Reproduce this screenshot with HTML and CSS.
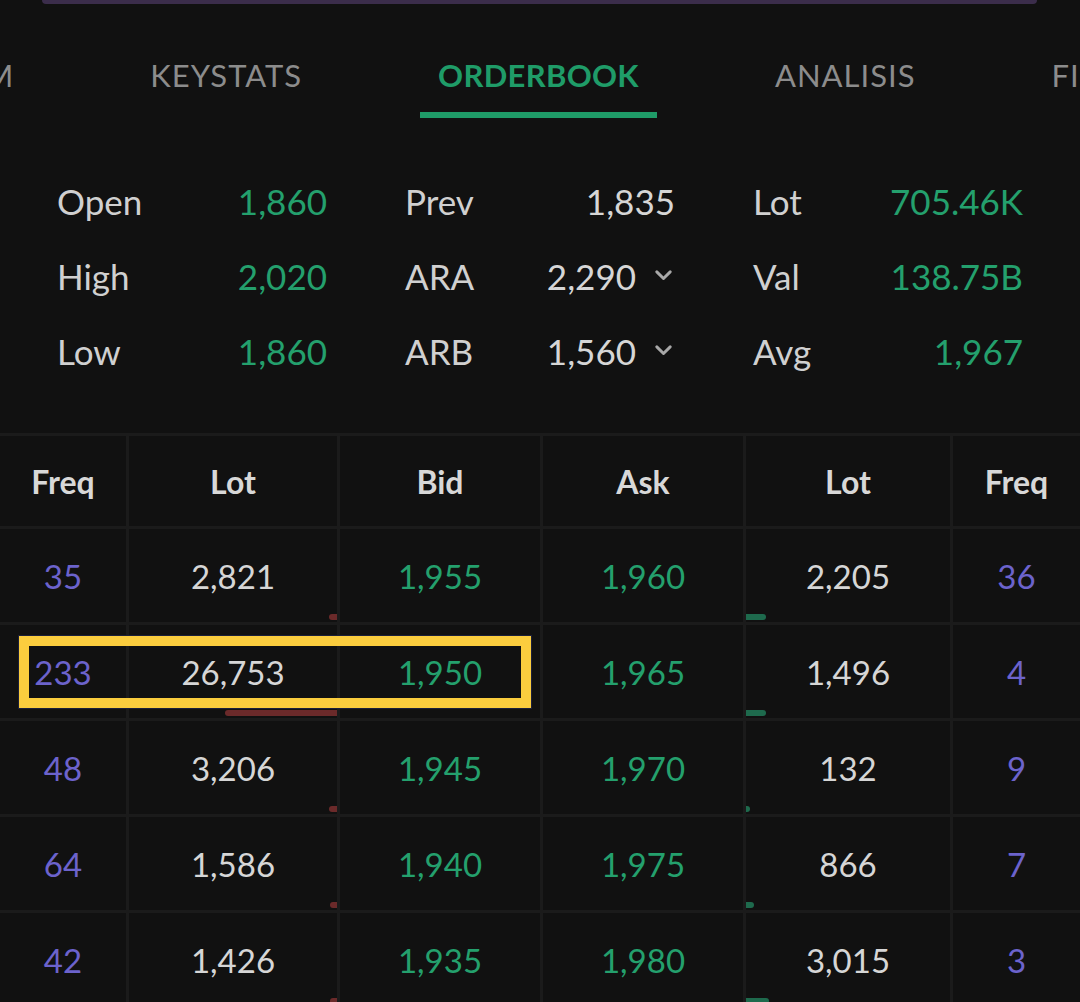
FILE: index.html
```html
<!DOCTYPE html>
<html lang="id">
<head>
  <meta charset="UTF-8">
  <meta name="viewport" content="width=device-width, initial-scale=1.0">
  <title>Orderbook</title>
  <link rel="stylesheet" href="styles.css">
</head>
<body>
  <!-- sisa kotak pencarian di atas -->
  <div class="search-edge"></div>

  <!-- Tab navigasi -->
  <nav class="tabs">
    <span class="tab">STREAM</span>
    <span class="tab">KEYSTATS</span>
    <span class="tab active">ORDERBOOK</span>
    <span class="tab">ANALISIS</span>
    <span class="tab">FINANCIALS</span>
  </nav>

  <!-- Ringkasan harga -->
  <section class="stats">
    <div class="stat"><span class="label">Open</span><span class="val up">1,860</span></div>
    <div class="stat"><span class="label">Prev</span><span class="val">1,835</span></div>
    <div class="stat"><span class="label">Lot</span><span class="val up">705.46K</span></div>

    <div class="stat"><span class="label">High</span><span class="val up">2,020</span></div>
    <div class="stat"><span class="label">ARA</span><span class="val">2,290<svg class="chev" viewBox="0 0 14 9"><path d="M1.5 1.5 7 7l5.5-5.5"/></svg></span></div>
    <div class="stat"><span class="label">Val</span><span class="val up">138.75B</span></div>

    <div class="stat"><span class="label">Low</span><span class="val up">1,860</span></div>
    <div class="stat"><span class="label">ARB</span><span class="val">1,560<svg class="chev" viewBox="0 0 14 9"><path d="M1.5 1.5 7 7l5.5-5.5"/></svg></span></div>
    <div class="stat"><span class="label">Avg</span><span class="val up">1,967</span></div>
  </section>

  <!-- Orderbook -->
  <section class="book">
    <div class="cell head">Freq</div>
    <div class="cell head">Lot</div>
    <div class="cell head">Bid</div>
    <div class="cell head">Ask</div>
    <div class="cell head">Lot</div>
    <div class="cell head">Freq</div>

    <div class="cell freq">35</div>
    <div class="cell">2,821<i class="depth bid" style="width:8px"></i></div>
    <div class="cell up">1,955</div>
    <div class="cell up">1,960</div>
    <div class="cell">2,205<i class="depth ask" style="width:20px"></i></div>
    <div class="cell freq">36</div>

    <div class="cell freq">233</div>
    <div class="cell">26,753<i class="depth bid" style="width:112px"></i></div>
    <div class="cell up">1,950</div>
    <div class="cell up">1,965</div>
    <div class="cell">1,496<i class="depth ask" style="width:20px"></i></div>
    <div class="cell freq">4</div>

    <div class="cell freq">48</div>
    <div class="cell">3,206<i class="depth bid" style="width:8px"></i></div>
    <div class="cell up">1,945</div>
    <div class="cell up">1,970</div>
    <div class="cell">132<i class="depth ask" style="width:4px"></i></div>
    <div class="cell freq">9</div>

    <div class="cell freq">64</div>
    <div class="cell">1,586<i class="depth bid" style="width:7px"></i></div>
    <div class="cell up">1,940</div>
    <div class="cell up">1,975</div>
    <div class="cell">866<i class="depth ask" style="width:8px"></i></div>
    <div class="cell freq">7</div>

    <div class="cell freq">42</div>
    <div class="cell">1,426<i class="depth bid" style="width:7px"></i></div>
    <div class="cell up">1,935</div>
    <div class="cell up">1,980</div>
    <div class="cell">3,015<i class="depth ask" style="width:23px"></i></div>
    <div class="cell freq">3</div>

    <!-- penanda kuning -->
    <div class="highlight"></div>
  </section>
</body>
</html>
```

FILE: styles.css
```css
/* Dasar */
body {
  margin: 0;
  background: #111111;
  color: #d2d2d2;
  font-family: 'Lato', 'Open Sans', sans-serif;
  width: 1080px;
  height: 1002px;
  overflow: hidden;
}

.search-edge {
  margin-left: 42px;
  width: 995px;
  height: 4px;
  background: #3b2d4b;
  border-radius: 0 0 4px 4px;
}

/* Tab */
.tabs {
  display: flex;
  gap: 100px;
  margin-top: 51px;
  margin-left: -132px;
  white-space: nowrap;
}

.tab {
  font-size: 31px;
  line-height: 40px;
  color: #8c8c8c;
  padding: 0 18px 17px;
  border-bottom: 6px solid transparent;
  letter-spacing: 1px;
}

.tab.active {
  color: #1f9c68;
  font-weight: 700;
  letter-spacing: 0.3px;
  border-bottom-color: #1f9c68;
}

/* Ringkasan */
.stats {
  display: grid;
  grid-template-columns: repeat(3, 270px);
  column-gap: 78px;
  padding: 45px 0 0 57px;
}

.stat {
  display: flex;
  justify-content: space-between;
  align-items: center;
  height: 75px;
  font-size: 35px;
}

.label {
  color: #d0d0d0;
}

.val {
  display: flex;
  align-items: center;
  color: #d6d6d6;
}

.up {
  color: #24a06d;
}

.chev {
  width: 17px;
  height: 11px;
  margin-left: 19px;
  margin-right: 3px;
  fill: none;
  stroke: #a8a8a8;
  stroke-width: 2.4;
  stroke-linecap: round;
  stroke-linejoin: round;
}

/* Tabel orderbook */
.book {
  position: relative;
  display: grid;
  grid-template-columns: 126px 208px 200px 200px 204px 1fr;
  grid-template-rows: 90px repeat(5, 93px);
  gap: 3px;
  margin-top: 45px;
  padding-top: 3px;
  background: #1b1b1b;
}

.cell {
  position: relative;
  display: flex;
  align-items: center;
  justify-content: center;
  background: #111111;
  font-size: 33px;
  color: #d6d6d6;
}

.cell.head {
  font-weight: 700;
  font-size: 32px;
  color: #d8d8d8;
}

.cell.freq {
  color: #6c63cc;
}

.cell.up {
  color: #24a06d;
}

/* bar kedalaman */
.depth {
  position: absolute;
  bottom: 2px;
  height: 6px;
  border-radius: 3px;
}

.depth.bid {
  right: 0;
  background: #6b2a2a;
  border-radius: 3px 0 0 3px;
}

.depth.ask {
  left: 0;
  background: #1e6a4d;
  border-radius: 0 3px 3px 0;
}

.highlight {
  position: absolute;
  left: 19px;
  top: 203px;
  width: 512px;
  height: 72px;
  box-sizing: border-box;
  border: 10px solid #fbcd3e;
  outline: 1px solid #1b1f3a;
  pointer-events: none;
}
```
